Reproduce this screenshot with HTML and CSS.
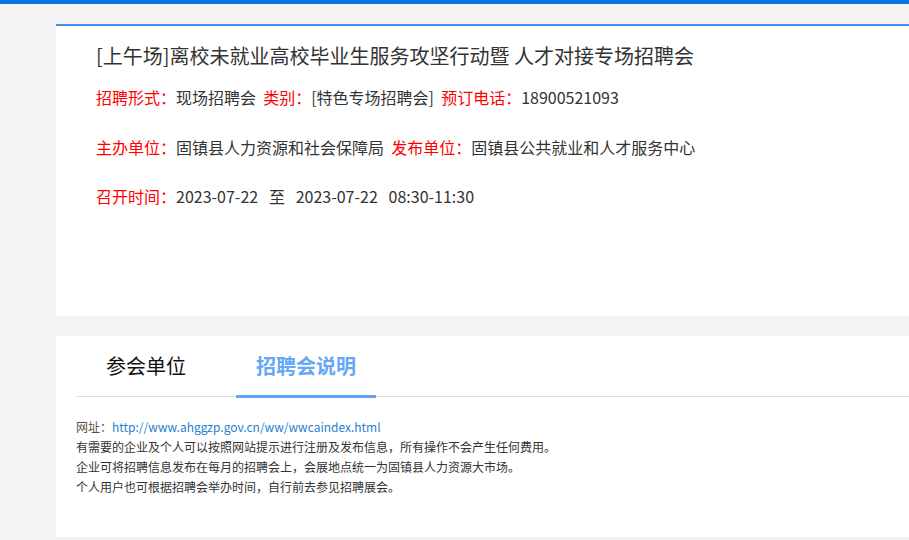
FILE: index.html
```html
<!DOCTYPE html>
<html lang="zh-CN">
<head>
<meta charset="utf-8">
<title>招聘会详情</title>
<link rel="stylesheet" href="styles.css">
</head>
<body>
<div class="topbar"></div>
<main class="main">
  <section class="card info">
    <h1 class="title">[上午场]离校未就业高校毕业生服务攻坚行动暨 人才对接专场招聘会</h1>
    <p class="row"><span class="lbl">招聘形式：</span>现场招聘会 &nbsp;<span class="lbl">类别：</span>[特色专场招聘会] &nbsp;<span class="lbl">预订电话：</span>18900521093</p>
    <p class="row gap"><span class="lbl">主办单位：</span>固镇县人力资源和社会保障局 &nbsp;<span class="lbl">发布单位：</span>固镇县公共就业和人才服务中心</p>
    <p class="row gap2"><span class="lbl">召开时间：</span>2023-07-22&nbsp;&nbsp; 至 &nbsp;&nbsp;2023-07-22&nbsp;&nbsp; 08:30-11:30</p>
  </section>
  <section class="card detail">
    <ul class="tabs">
      <li class="tab">参会单位</li>
      <li class="tab active">招聘会说明</li>
    </ul>
    <div class="desc">
      <p><span class="site">网址：</span><a class="link" href="#">http://www.ahggzp.gov.cn/ww/wwcaindex.html</a></p>
      <p>有需要的企业及个人可以按照网站提示进行注册及发布信息，所有操作不会产生任何费用。</p>
      <p>企业可将招聘信息发布在每月的招聘会上，会展地点统一为固镇县人力资源大市场。</p>
      <p>个人用户也可根据招聘会举办时间，自行前去参见招聘展会。</p>
    </div>
  </section>
</main>
</body>
</html>
```
FILE: styles.css
```css
* { box-sizing: border-box; }
html, body { margin: 0; padding: 0; }
body {
  background: #f3f3f3;
  font-family: "Noto Sans CJK SC", "Noto Sans", sans-serif;
  color: #333;
}
.topbar { height: 4px; background: #0776df; }
.main {
  padding: 20px 0 3px 56px;
  display: flex;
  flex-direction: column;
  gap: 20px;
}
.card { background: #fff; }
.info {
  border-top: 2px solid #3f90f2;
  height: 292px;
  padding: 15px 0 0 40px;
}
.title {
  margin: 0;
  font-size: 20px;
  font-weight: normal;
  line-height: 30px;
  color: #333;
}
.row {
  margin: 14px 0 0;
  font-size: 16px;
  line-height: 24px;
  color: #333;
}
.row.gap { margin-top: 26px; }
.row.gap2 { margin-top: 25px; }
.lbl { color: #ff0000; }
.detail {
  padding: 0 0 40px 20px;
}
.tabs {
  list-style: none;
  margin: 0;
  padding: 0;
  display: flex;
  gap: 20px;
  border-bottom: 1px solid #dddddd;
}
.tab {
  width: 140px;
  text-align: center;
  font-size: 20px;
  line-height: 58px;
  padding-top: 1px;
  color: #111;
  border-bottom: 3px solid transparent;
  margin-bottom: -2px;
}
.tab.active {
  color: #66a6f7;
  font-weight: bold;
  border-bottom-color: #62a3f8;
}
.desc {
  padding-top: 20px;
  font-size: 12px;
  line-height: 20px;
}
.desc p { margin: 0; color: #333; }
.site { color: #5a5046; }
.link { color: #1f7fd2; text-decoration: none; }
```
